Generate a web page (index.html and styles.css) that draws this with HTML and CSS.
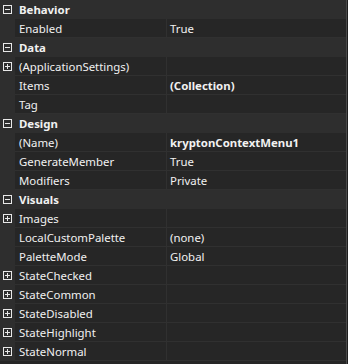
FILE: index.html
```html
<!DOCTYPE html>
<html lang="en">

<head>
    <meta charset="UTF-8">
    <title>Properties</title>
    <link rel="stylesheet" href="styles.css">
</head>

<body>
    <div class="grid">
        <div class="category"><span class="toggle minus"></span><span class="cat-name">Behavior</span></div>
        <div class="prop"><span class="gutter"></span><span class="name">Enabled</span><span class="value">True</span></div>

        <div class="category"><span class="toggle minus"></span><span class="cat-name">Data</span></div>
        <div class="prop"><span class="gutter"><span class="toggle plus"></span></span><span class="name">(ApplicationSettings)</span><span class="value"></span></div>
        <div class="prop"><span class="gutter"></span><span class="name">Items</span><span class="value bold">(Collection)</span></div>
        <div class="prop"><span class="gutter"></span><span class="name">Tag</span><span class="value"></span></div>

        <div class="category"><span class="toggle minus"></span><span class="cat-name">Design</span></div>
        <div class="prop"><span class="gutter"></span><span class="name">(Name)</span><span class="value bold">kryptonContextMenu1</span></div>
        <div class="prop"><span class="gutter"></span><span class="name">GenerateMember</span><span class="value">True</span></div>
        <div class="prop"><span class="gutter"></span><span class="name">Modifiers</span><span class="value">Private</span></div>

        <div class="category"><span class="toggle minus"></span><span class="cat-name">Visuals</span></div>
        <div class="prop"><span class="gutter"><span class="toggle plus"></span></span><span class="name">Images</span><span class="value"></span></div>
        <div class="prop"><span class="gutter"></span><span class="name">LocalCustomPalette</span><span class="value">(none)</span></div>
        <div class="prop"><span class="gutter"></span><span class="name">PaletteMode</span><span class="value">Global</span></div>
        <div class="prop"><span class="gutter"><span class="toggle plus"></span></span><span class="name">StateChecked</span><span class="value"></span></div>
        <div class="prop"><span class="gutter"><span class="toggle plus"></span></span><span class="name">StateCommon</span><span class="value"></span></div>
        <div class="prop"><span class="gutter"><span class="toggle plus"></span></span><span class="name">StateDisabled</span><span class="value"></span></div>
        <div class="prop"><span class="gutter"><span class="toggle plus"></span></span><span class="name">StateHighlight</span><span class="value"></span></div>
        <div class="prop"><span class="gutter"><span class="toggle plus"></span></span><span class="name">StateNormal</span><span class="value"></span></div>
    </div>
</body>

</html>
```

FILE: styles.css
```css
/* Page */
body {
    margin: 0;
    background-color: #1e1e1e;
    font-family: 'Noto Sans', 'Open Sans', sans-serif;
    font-size: 11.4px;
    color: #f1f1f1;
}

.grid {
    width: 346px;
    height: 364px;
    background-color: #262626;
    border-right: 1px solid #4a4a4a;
}

/* Category rows */
.category {
    display: flex;
    align-items: center;
    height: 19px;
    background-color: #2e2e2e;
}

.cat-name {
    font-weight: bold;
    margin-left: 7px;
}

/* Property rows */
.prop {
    display: grid;
    grid-template-columns: 15px 152px 1fr;
    height: 19px;
}

.gutter {
    display: flex;
    align-items: center;
    background-color: #2e2e2e;
}

.name, .value {
    display: flex;
    align-items: center;
    background-color: #262626;
    border-bottom: 1px solid #303030;
    white-space: nowrap;
    overflow: hidden;
}

.name {
    padding-left: 4px;
    border-right: 1px solid #303030;
}

.value {
    padding-left: 3px;
}

.bold {
    font-weight: bold;
}

/* Expand / collapse boxes */
.toggle {
    position: relative;
    display: inline-block;
    width: 7px;
    height: 7px;
    margin-left: 3px;
    border: 1px solid #e8e8e8;
}

.toggle::before {
    content: "";
    position: absolute;
    left: 1px;
    top: 3px;
    width: 5px;
    height: 1px;
    background-color: #e8e8e8;
}

.toggle.plus::after {
    content: "";
    position: absolute;
    left: 3px;
    top: 1px;
    width: 1px;
    height: 5px;
    background-color: #e8e8e8;
}
```
